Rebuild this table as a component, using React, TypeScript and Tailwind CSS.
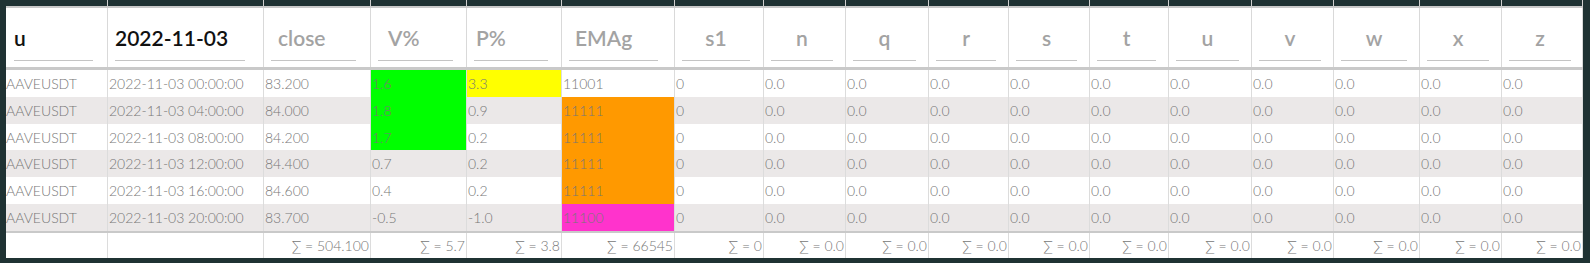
import React from 'react';

type Col = {
  head: string;
  center?: boolean;
  pad?: string;
  mr: string;
  ml: string;
  dark?: boolean;
};

const cols: Col[] = [
  { head: 'u', ml: 'ml-[8px]', mr: 'mr-[14px]', dark: true },
  { head: '2022-11-03', ml: 'ml-[7px]', mr: 'mr-[18px]', dark: true },
  { head: 'close', ml: 'ml-[7px]', mr: 'mr-[14px]', pad: 'pl-[7px]' },
  { head: 'V%', ml: 'ml-[7px]', mr: 'mr-[13px]', pad: 'pl-[10px]' },
  { head: 'P%', ml: 'ml-[7px]', mr: 'mr-[13px]', pad: 'pl-[2px]' },
  { head: 'EMAg', ml: 'ml-[7px]', mr: 'mr-[16px]', pad: 'pl-[6px]' },
  { head: 's1', ml: 'ml-[7px]', mr: 'mr-[13px]', center: true },
  { head: 'n', ml: 'ml-[7px]', mr: 'mr-[12px]', center: true },
  { head: 'q', ml: 'ml-[7px]', mr: 'mr-[12px]', center: true },
  { head: 'r', ml: 'ml-[7px]', mr: 'mr-[12px]', center: true },
  { head: 's', ml: 'ml-[7px]', mr: 'mr-[12px]', center: true },
  { head: 't', ml: 'ml-[7px]', mr: 'mr-[12px]', center: true },
  { head: 'u', ml: 'ml-[7px]', mr: 'mr-[12px]', center: true },
  { head: 'v', ml: 'ml-[7px]', mr: 'mr-[12px]', center: true },
  { head: 'w', ml: 'ml-[7px]', mr: 'mr-[12px]', center: true },
  { head: 'x', ml: 'ml-[7px]', mr: 'mr-[12px]', center: true },
  { head: 'z', ml: 'ml-[7px]', mr: 'mr-[11px]', center: true },
];

const grid =
  'grid grid-cols-[102px_156px_107px_96px_95px_113px_89px_82px_83px_80px_81px_79px_83px_82px_86px_82px_81px]';

const GREEN = 'bg-[#00ff00]';
const YELLOW = 'bg-[#ffff00]';
const ORANGE = 'bg-[#ff9900]';
const PINK = 'bg-[#ff33cc]';

const rows = [
  { t: '00:00:00', close: '83.200', v: '1.6', p: '3.3', e: '11001', vc: GREEN, pc: YELLOW, ec: '' },
  { t: '04:00:00', close: '84.000', v: '1.8', p: '0.9', e: '11111', vc: GREEN, pc: '', ec: ORANGE },
  { t: '08:00:00', close: '84.200', v: '1.7', p: '0.2', e: '11111', vc: GREEN, pc: '', ec: ORANGE },
  { t: '12:00:00', close: '84.400', v: '0.7', p: '0.2', e: '11111', vc: '', pc: '', ec: ORANGE },
  { t: '16:00:00', close: '84.600', v: '0.4', p: '0.2', e: '11111', vc: '', pc: '', ec: ORANGE },
  { t: '20:00:00', close: '83.700', v: '-0.5', p: '-1.0', e: '11100', vc: '', pc: '', ec: PINK },
];

const sums = ['', '', '504.100', '5.7', '3.8', '66545', '0', '0.0', '0.0', '0.0', '0.0', '0.0', '0.0', '0.0', '0.0', '0.0', '0.0'];

const App: React.FC = () => {
  return (
    <div
      className="w-[1590px] h-[263px] bg-[#1f3233] pl-[6px] overflow-hidden"
      style={{ fontFamily: 'Lato, "Open Sans", sans-serif' }}
    >
      <div className="w-[1577px] overflow-hidden">
        {/* dark strip above the header, column lines show through */}
        <div className={`${grid} h-[6px]`}>
          {cols.map((c, i) => (
            <div key={i} className="border-r border-[#cfcfcf]" />
          ))}
        </div>
        <div className="h-[2px] bg-[#c9c9c9]" />

        {/* header */}
        <div className={`${grid} h-[59px] bg-white`}>
          {cols.map((c, i) => (
            <div key={i} className="border-r border-[#d9d9d9]">
              <div
                className={`mt-[17px] h-[36px] border-b border-[#c4c4c4] ${c.ml} ${c.mr} ${c.pad ?? ''} ${
                  c.center ? 'text-center' : 'text-left'
                } text-[21px] leading-[26px] font-semibold whitespace-nowrap ${
                  c.dark ? 'text-[#111]' : 'text-[#a3a3a3]'
                }`}
              >
                {c.head}
              </div>
            </div>
          ))}
        </div>
        <div className="h-[3px] bg-[#c9c9c9]" />

        {/* body */}
        <div className="h-[161px] flex flex-col bg-white">
          {rows.map((r, ri) => {
            const cells = [
              { v: 'AAVEUSDT', bg: '' },
              { v: `2022-11-03 ${r.t}`, bg: '' },
              { v: r.close, bg: '' },
              { v: r.v, bg: r.vc },
              { v: r.p, bg: r.pc },
              { v: r.e, bg: r.ec },
              { v: '0', bg: '' },
              ...Array.from({ length: 10 }, () => ({ v: '0.0', bg: '' })),
            ];
            return (
              <div
                key={ri}
                className={`${grid} flex-1 ${ri % 2 === 1 ? 'bg-[#ebe8e8]' : 'bg-white'}`}
              >
                {cells.map((c, ci) => (
                  <div
                    key={ci}
                    className={`border-r border-[#dcdcdc] ${c.bg} flex items-center ${
                      ci === 0 ? 'pl-0' : 'pl-[1px]'
                    } text-[14px] font-light text-[#777] whitespace-nowrap overflow-hidden`}
                  >
                    {c.v}
                  </div>
                ))}
              </div>
            );
          })}
        </div>
        <div className="h-[2px] bg-[#c9c9c9]" />

        {/* footer sums */}
        <div className={`${grid} h-[25px] bg-white`}>
          {sums.map((s, i) => (
            <div
              key={i}
              className="border-r border-[#dcdcdc] flex items-center justify-end pr-[1px] text-[14px] font-light text-[#777] whitespace-nowrap"
            >
              {s && `∑ = ${s}`}
            </div>
          ))}
        </div>
      </div>
    </div>
  );
};

export default App;
